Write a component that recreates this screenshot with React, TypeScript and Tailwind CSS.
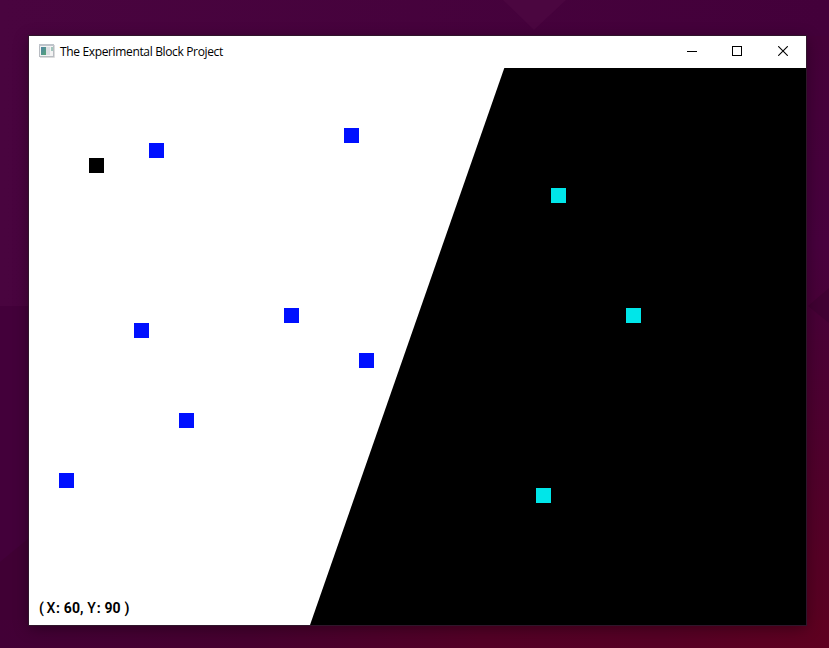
type Block = { x: number; y: number; color: string };

const blocks: Block[] = [
  { x: 60, y: 90, color: 'bg-black' },
  { x: 120, y: 75, color: 'bg-[#0010ff]' },
  { x: 315, y: 60, color: 'bg-[#0010ff]' },
  { x: 105, y: 255, color: 'bg-[#0010ff]' },
  { x: 255, y: 240, color: 'bg-[#0010ff]' },
  { x: 330, y: 285, color: 'bg-[#0010ff]' },
  { x: 150, y: 345, color: 'bg-[#0010ff]' },
  { x: 30, y: 405, color: 'bg-[#0010ff]' },
  { x: 522, y: 120, color: 'bg-[#00e6e9]' },
  { x: 597, y: 240, color: 'bg-[#00e6e9]' },
  { x: 507, y: 420, color: 'bg-[#00e6e9]' },
];

function Wallpaper() {
  return (
    <svg className="absolute inset-0" width="829" height="648" viewBox="0 0 829 648">
      <defs>
        <linearGradient id="top" x1="0" y1="0" x2="1" y2="0">
          <stop offset="0" stopColor="#49043f" />
          <stop offset="1" stopColor="#43003a" />
        </linearGradient>
        <linearGradient id="right" x1="0" y1="0" x2="0" y2="1">
          <stop offset="0" stopColor="#440038" />
          <stop offset="0.34" stopColor="#47003d" />
          <stop offset="0.46" stopColor="#480036" />
          <stop offset="0.75" stopColor="#510029" />
          <stop offset="1" stopColor="#5b001f" />
        </linearGradient>
        <linearGradient id="bottom" x1="0" y1="0" x2="1" y2="0">
          <stop offset="0" stopColor="#420036" />
          <stop offset="0.3" stopColor="#46002f" />
          <stop offset="0.58" stopColor="#530026" />
          <stop offset="0.8" stopColor="#560025" />
          <stop offset="1" stopColor="#5e0020" />
        </linearGradient>
      </defs>
      <rect width="829" height="648" fill="url(#top)" />
      <path d="M0 306H60V648H0Z" fill="#43003a" />
      <path d="M0 562L29 538V648H0Z" fill="#400034" />
      <path d="M503 0H566L534 30Z" fill="#4b0640" />
      <rect x="780" y="36" width="49" height="612" fill="url(#right)" />
      <path d="M829 288L808 306L829 323Z" fill="#400032" />
      <path d="M0 620H829V648H0Z" fill="url(#bottom)" />
    </svg>
  );
}

function TitleBar() {
  return (
    <header className="flex h-8 shrink-0 items-center bg-white">
      <svg className="ml-2.5 -mt-0.5 shrink-0" width="16" height="14" viewBox="0 0 16 14">
        <defs>
          <linearGradient id="pane" x1="0" y1="0" x2="1" y2="1">
            <stop offset="0" stopColor="#4f83a5" />
            <stop offset="1" stopColor="#55a576" />
          </linearGradient>
        </defs>
        <rect x="0.5" y="0.5" width="14" height="12" fill="#f3f3f3" stroke="#b8bcc2" />
        <rect x="0" y="0" width="15" height="2" fill="#bfc4cb" />
        <rect x="2" y="3" width="5" height="8" fill="url(#pane)" />
        <rect x="7" y="3" width="4" height="8" fill="#dcdfe3" />
        <rect x="12" y="3" width="2" height="4" fill="#a3c7bd" />
        <path d="M1 13.5H15.5V1" stroke="#dcdcdc" fill="none" />
      </svg>
      <h1 className="ml-[5px] whitespace-nowrap font-['Open_Sans','Noto_Sans',sans-serif] text-[12px] font-normal leading-4 tracking-[-0.35px] text-black">
        The Experimental Block Project
      </h1>
      <div className="ml-auto flex h-full pb-0.5">
        <button aria-label="Minimize" className="flex w-11 items-center justify-center">
          <svg width="10" height="10" viewBox="0 0 10 10" shapeRendering="crispEdges">
            <rect y="5" width="10" height="1" />
          </svg>
        </button>
        <button aria-label="Maximize" className="flex w-[46px] items-center justify-center">
          <svg width="10" height="10" viewBox="0 0 10 10" shapeRendering="crispEdges">
            <rect x="0.5" y="0.5" width="9" height="9" fill="none" stroke="#000" />
          </svg>
        </button>
        <button aria-label="Close" className="flex w-[46px] items-center justify-center">
          <svg width="10" height="10" viewBox="0 0 10 10">
            <path d="M0.2 0.2L9.8 9.8M9.8 0.2L0.2 9.8" stroke="#000" strokeWidth="1.1" />
          </svg>
        </button>
      </div>
    </header>
  );
}

export default function App() {
  return (
    <main className="relative h-[648px] w-[829px] overflow-hidden bg-[#46003b] pl-[29px] pt-9">
      <Wallpaper />
      <section className="relative flex h-[589px] w-[777px] flex-col shadow-[0_0_0_1px_#30152b,0_3px_14px_rgba(0,0,0,0.38)]">
        <TitleBar />
        <div className="relative flex flex-1 flex-col justify-end bg-white">
          <svg className="absolute inset-0" width="777" height="557" viewBox="0 0 777 557">
            <path d="M475.3 0H777V557H281Z" fill="#000" />
          </svg>
          {blocks.map((block) => (
            <div
              key={`${block.x}-${block.y}`}
              className={`absolute size-[15px] ${block.color}`}
              style={{ left: block.x, top: block.y }}
            />
          ))}
          <p className="relative mb-2 ml-2.5 whitespace-pre font-['Roboto','Liberation_Sans',sans-serif] text-[14px] font-bold leading-[18px] tracking-[0.15px] text-black">
            <span className="tracking-[-0.5px]">( </span>
            <span className="font-medium tracking-[0.8px]">X</span>: 60, <span className="font-medium tracking-[0.8px]">Y</span>: 90 )
          </p>
        </div>
      </section>
    </main>
  );
}
